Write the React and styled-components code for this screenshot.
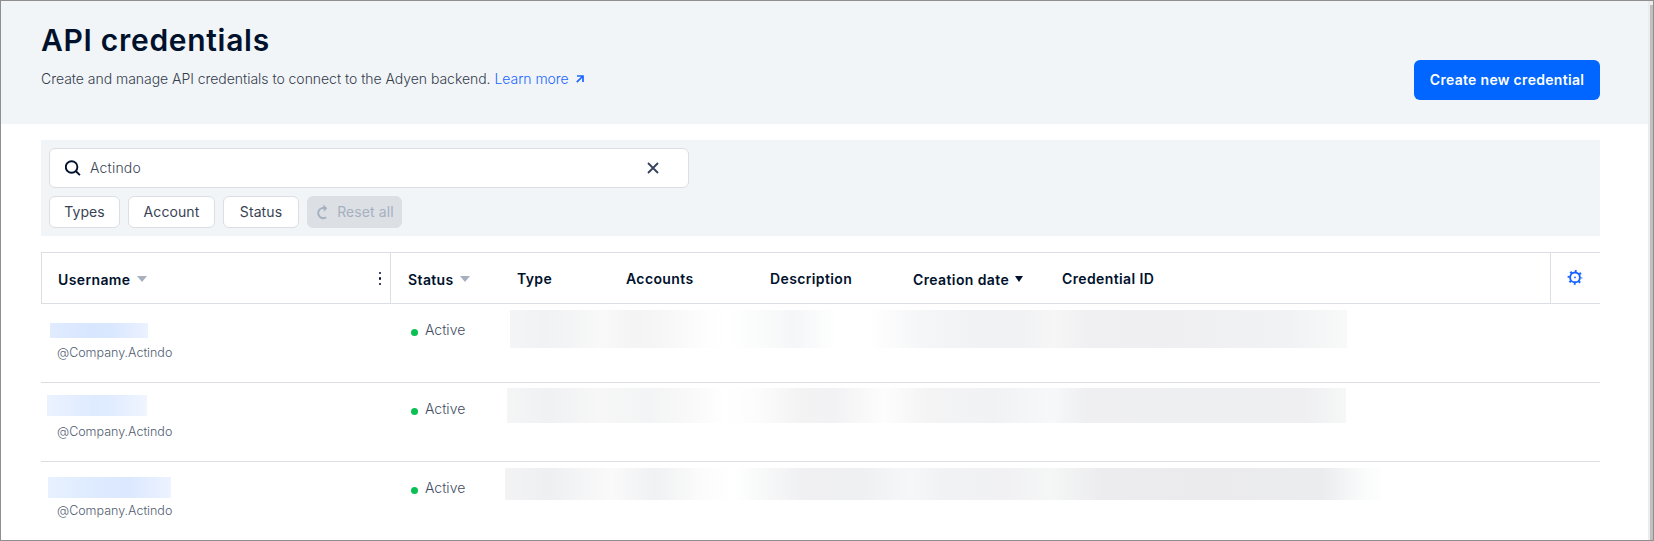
import React from "react";
import styled, { createGlobalStyle } from "styled-components";

const Global = createGlobalStyle`
  * { box-sizing: border-box; }
  body {
    margin: 0;
    background: #fff;
    color: #00112c;
    font-family: Inter, "Liberation Sans", sans-serif;
    font-size: 14px;
  }
  button { font-family: inherit; }
`;

const Frame = styled.div`
  display: flex;
  height: 541px;
  overflow: hidden;
  border: 1px solid #8f8f8f;
`;

const Page = styled.main`
  flex: 1;
  min-width: 0;
`;

const ScrollTrack = styled.div`
  width: 5px;
  padding: 4px 0 0 2px;
  background: #ececec;
`;

const ScrollThumb = styled.div`
  height: 100%;
  background: #bfbfbf;
`;

const Header = styled.header`
  display: flex;
  justify-content: space-between;
  align-items: flex-start;
  height: 123px;
  padding: 19px 48px 0 40px;
  background: #f2f5f8;
`;

const Title = styled.h1`
  margin: 0;
  font-size: 30px;
  font-weight: 600;
  line-height: 40px;
  letter-spacing: 0.7px;
  white-space: nowrap;
`;

const Description = styled.p`
  display: flex;
  align-items: center;
  margin: 9px 0 0;
  color: #333d4d;
  font-weight: 300;
  line-height: 20px;
  letter-spacing: -0.035px;
  white-space: pre;
`;

const Link = styled.a`
  display: inline-flex;
  align-items: center;
  gap: 7px;
  color: #1a66ff;
`;

const PrimaryButton = styled.button`
  width: 186px;
  height: 40px;
  margin-top: 40px;
  padding: 0 0 2px;
  border: 0;
  border-radius: 6px;
  background: #0066ff;
  color: #fff;
  font-size: 14px;
  font-weight: 600;
  letter-spacing: 0.3px;
  white-space: nowrap;
`;

const Content = styled.section`
  padding: 16px 48px 0 40px;
`;

const Filters = styled.div`
  height: 96px;
  padding: 8px;
  background: #f2f5f8;
`;

const SearchField = styled.div`
  display: flex;
  align-items: center;
  width: 640px;
  height: 40px;
  padding: 0 29px 0 15px;
  border: 1px solid #dbdee2;
  border-radius: 6px;
  background: #fff;
`;

const SearchText = styled.span`
  flex: 1;
  margin-left: 9px;
  color: #3a4453;
  font-weight: 300;
  line-height: 20px;
  letter-spacing: 0.2px;
`;

const Chips = styled.div`
  display: flex;
  gap: 8px;
  margin-top: 8px;
`;

const Chip = styled.button`
  display: flex;
  align-items: center;
  justify-content: center;
  gap: 8px;
  width: ${(p) => p.$width}px;
  height: 32px;
  padding: 0 0 1px;
  border: 1px solid ${(p) => (p.disabled ? "#dce0e5" : "#dbdee2")};
  border-radius: 6px;
  background: ${(p) => (p.disabled ? "#dce0e5" : "#fff")};
  color: ${(p) => (p.disabled ? "#a6b0bf" : "#394354")};
  font-size: 14px;
  font-weight: 400;
  letter-spacing: 0.1px;
  white-space: nowrap;
`;

const Table = styled.div`
  margin-top: 16px;
`;

const HeadRow = styled.div`
  display: grid;
  grid-template-columns: 350px 109px 109px 144px 143px 149px 1fr 50px;
  height: 52px;
  border: solid #dbdee2;
  border-width: 1px 0;
`;

const HeadCell = styled.div`
  display: flex;
  align-items: center;
  gap: 6px;
  padding: ${(p) => (p.$sortable ? "2px" : "0")} 8px 0 ${(p) => (p.$first ? 16 : 17)}px;
  border: solid #dbdee2;
  border-width: 0 ${(p) => (p.$first ? "1px 0 1px" : "0")};
  font-size: 14px;
  font-weight: 600;
  letter-spacing: 0.38px;
  white-space: nowrap;
`;

const SettingsCell = styled.div`
  display: flex;
  justify-content: center;
  padding: 16px 2px 0 0;
  border-left: 1px solid #dbdee2;
`;

const Caret = styled.span`
  border: solid transparent;
  border-width: ${(p) => (p.$active ? "6px 4.5px 0" : "6px 5px 0")};
  border-top-color: ${(p) => (p.$active ? "#00112c" : "#a6b0bf")};
`;

const More = styled.span`
  display: flex;
  flex-direction: column;
  gap: 3px;
  margin: -1px 1px 0 auto;
`;

const MoreDot = styled.i`
  width: 2.4px;
  height: 2.4px;
  border-radius: 1px;
  background: #00112c;
`;

const Row = styled.div`
  display: grid;
  grid-template-columns: 350px 109px 1fr;
  align-items: start;
  height: 79px;
  border-bottom: 1px solid ${(p) => (p.$last ? "transparent" : "#dbdee2")};
`;

const UserCell = styled.div`
  display: flex;
  flex-direction: column;
  height: 59px;
`;

const Redaction = styled.div`
  flex: none;
  width: ${(p) => p.$w}px;
  height: ${(p) => p.$h}px;
  margin: ${(p) => p.$top}px 0 0 ${(p) => p.$left}px;
  background: linear-gradient(90deg, ${(p) => p.$stops});
`;

const Company = styled.span`
  margin: auto 0 0 16px;
  color: #505c70;
  font-size: 12.5px;
  font-weight: 350;
  line-height: 20px;
  letter-spacing: -0.01px;
`;

const StatusCell = styled.div`
  display: flex;
  align-items: center;
  gap: 7px;
  padding: 16px 0 0 20px;
  color: #414d63;
  font-size: 14px;
  font-weight: 300;
  line-height: 20px;
`;

const StatusDot = styled.i`
  width: 7px;
  height: 7px;
  margin-top: 5px;
  border-radius: 50%;
  background: #0abf53;
`;

const Arrow = styled.svg`
  margin-left: -4px;
`;

const ArrowIcon = () => (
  <Arrow width="8" height="8" viewBox="0 0 8 8" fill="none" stroke="currentColor" strokeWidth="1.7">
    <path d="M1 1H7V7M7 1L0.8 7.2" />
  </Arrow>
);

const SearchIcon = () => (
  <svg width="16" height="16" viewBox="0 0 16 16" fill="none" stroke="#00112c" strokeWidth="1.9">
    <circle cx="6.6" cy="7" r="5.8" />
    <path d="M10.7 11L14.9 15.2" />
  </svg>
);

const CloseIcon = () => (
  <svg width="12" height="12" viewBox="0 0 12 12" fill="none" stroke="#35415a" strokeWidth="1.8">
    <path d="M1 1L11 11M11 1L1 11" />
  </svg>
);

const ResetIcon = () => (
  <svg width="14" height="16" viewBox="0 0 14 16" fill="none" stroke="currentColor" strokeWidth="2">
    <path d="M9.5 4.1H7A5.1 5.1 0 1 0 11.2 13.2" />
    <path d="M8.2 0.6L12.3 4.2L8.9 7.8Z" fill="currentColor" stroke="none" />
  </svg>
);

const GearIcon = () => (
  <svg width="16" height="16" viewBox="0 0 16 16" fill="none" stroke="#1463ff">
    <circle cx="8" cy="8.4" r="4.9" strokeWidth="1.9" />
    <circle cx="8" cy="8.4" r="6.4" strokeWidth="2" strokeDasharray="1.9 3.1265" strokeDashoffset="0.95" />
    <circle cx="8" cy="8.4" r="0.9" fill="#1463ff" stroke="none" />
  </svg>
);

const columns = [
  { label: "Username", sort: "idle", menu: true },
  { label: "Status", sort: "idle" },
  { label: "Type" },
  { label: "Accounts" },
  { label: "Description" },
  { label: "Creation date", sort: "active" },
  { label: "Credential ID" },
];

const rows = [
  {
    name: { $w: 98, $h: 15, $top: 19, $left: 9, $stops: "#e0ebff, #d8e6ff 40%, #d9e7ff 62%, #ebf2ff" },
    data: {
      $w: 837, $h: 38, $top: 6, $left: 10,
      $stops: "#f4f5f6, #f1f2f4 4%, #f3f4f5 7%, #f9f9f9 11%, #f4f4f4 15%, #f6f6f6 18%, #fdfdfd 23%, #fff 26%, #f9fafa 31%, #f5f6f8 34%, #fff 39%, #fff 43%, #f5f6f7 49%, #f1f2f4 56%, #f1f2f4 61%, #f6f6f6 65%, #f0f0f3 69%, #efeff2 78%, #f1f2f4 93%, #f6f7f7 98%, #f8f9f9",
    },
  },
  {
    name: { $w: 100, $h: 21, $top: 12, $left: 6, $stops: "#ebf2ff, #deebff 45%, #dfebff 60%, #f0f5ff" },
    data: {
      $w: 839, $h: 35, $top: 5, $left: 7,
      $stops: "#f4f5f5, #f0f1f3 5%, #f7f7f7 11%, #f3f4f5 17%, #f9f9f9 22%, #fff 26%, #fcfcfc 30%, #f3f3f4 35%, #f2f2f4 39%, #fdfdfd 45%, #f4f4f5 50%, #f1f2f4 58%, #f7f8f9 65%, #efeff1 69%, #eeeff1 85%, #efeff1 95%, #f6f7f7",
    },
  },
  {
    name: { $w: 123, $h: 21, $top: 15, $left: 7, $stops: "#e7f1ff, #ddeaff 42%, #dbe8ff 65%, #edf3ff" },
    data: {
      $w: 879, $h: 32, $top: 6, $left: 5,
      $stops: "#f3f3f4, #eeeff1 5%, #fafafa 12%, #f0f1f3 17%, #fbfbfb 22%, #fff 26%, #f8f9f9 29%, #f0f0f2 34%, #eff0f2 41%, #f6f7f8 46%, #f1f2f4 50%, #f1f1f3 57%, #f5f6f6 62%, #ececee 68%, #ebebed 80%, #ebecee 93%, #f8f9f9 97%, #fff",
    },
  },
];

export default function App() {
  return (
    <>
      <Global />
      <Frame>
        <Page>
          <Header>
            <div>
              <Title>API credentials</Title>
              <Description>
                {"Create and manage API credentials to connect to the Adyen backend. "}
                <Link>Learn more <ArrowIcon /></Link>
              </Description>
            </div>
            <PrimaryButton>Create new credential</PrimaryButton>
          </Header>
          <Content>
            <Filters>
              <SearchField>
                <SearchIcon />
                <SearchText>Actindo</SearchText>
                <CloseIcon />
              </SearchField>
              <Chips>
                <Chip $width={71}>Types</Chip>
                <Chip $width={87}>Account</Chip>
                <Chip $width={76}>Status</Chip>
                <Chip $width={95} disabled><ResetIcon />Reset all</Chip>
              </Chips>
            </Filters>
            <Table>
              <HeadRow>
                {columns.map((c) => (
                  <HeadCell key={c.label} $first={c.menu} $sortable={!!c.sort}>
                    {c.label}
                    {c.sort && <Caret $active={c.sort === "active"} />}
                    {c.menu && <More><MoreDot /><MoreDot /><MoreDot /></More>}
                  </HeadCell>
                ))}
                <SettingsCell><GearIcon /></SettingsCell>
              </HeadRow>
              {rows.map((r, i) => (
                <Row key={i} $last={i === rows.length - 1}>
                  <UserCell>
                    <Redaction {...r.name} />
                    <Company>@Company.Actindo</Company>
                  </UserCell>
                  <StatusCell><StatusDot />Active</StatusCell>
                  <Redaction {...r.data} />
                </Row>
              ))}
            </Table>
          </Content>
        </Page>
        <ScrollTrack><ScrollThumb /></ScrollTrack>
      </Frame>
    </>
  );
}
